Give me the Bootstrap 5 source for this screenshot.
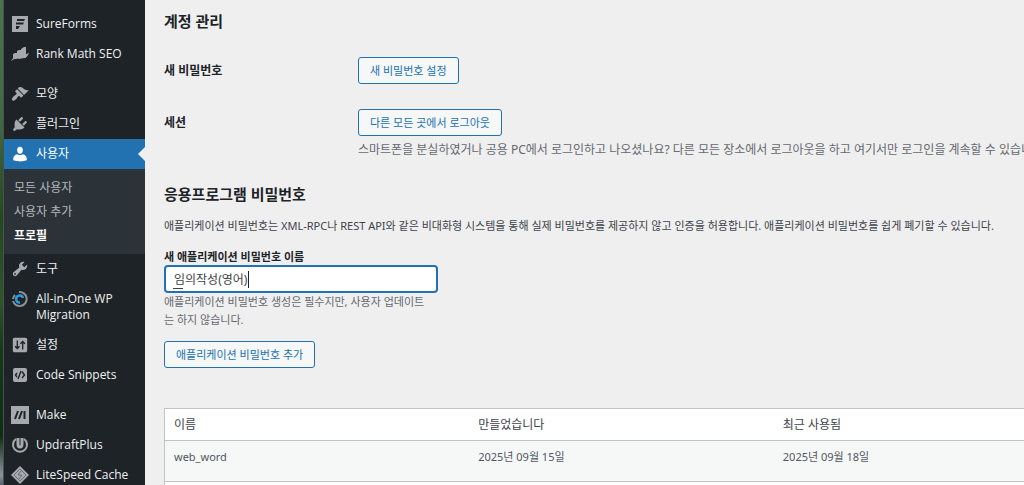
<!DOCTYPE html>
<html lang="ko">
<head>
<meta charset="utf-8">
<meta name="viewport" content="width=device-width, initial-scale=1">
<title>프로필</title>
<link rel="stylesheet" href="https://cdn.jsdelivr.net/npm/bootstrap@5.3.0/dist/css/bootstrap.min.css">
<style>
body{font-family:"Noto Sans","Noto Sans CJK KR",sans-serif;font-size:12px;line-height:18px;background:#efefef;color:#3c434a}
.desk-edge{width:4px;background:linear-gradient(to bottom,#4a7547 0,#41693f 25%,#24471f 45%,#2d5626 62%,#153a17 72%,#102c14 90%,#8a929c 98%,#59626c 100%);border-right:1px solid #4a4f52}
.admin-menu{width:141px;padding-top:9px;background:#1d2327;font-family:"Open Sans","Noto Sans CJK KR",sans-serif}
.menu-link{display:flex;gap:7px;padding:7px;color:#f0f0f1;text-decoration:none;line-height:16px;position:relative}
.menu-link svg{width:18px;height:18px;flex:none;margin:-1px 0;fill:#a7aaad}
.menu-gap{margin-top:10px}
.menu-link.active{background:#2271b1;color:#fff}
.menu-link.active svg{fill:#fff}
.menu-link.active::after{content:"";position:absolute;right:0;top:8px;border:7px solid transparent;border-right-color:#efefef;border-left:0}
.sub-menu{background:#2c3338;padding:7px 0 6px}
.sub-menu a{display:block;padding:4px 10px;line-height:16px;color:#b4b9be;text-decoration:none}
.sub-menu a.current{color:#fff;font-weight:700}
.page-main{min-width:0;padding:10px 0 0 19px}
h2{font-size:15px;line-height:22px;font-weight:700;color:#1d2327;margin:0}
.form-line{display:grid;grid-template-columns:194px 1fr;margin-top:25px}
.form-head{font-weight:700;color:#1d2327}
.form-line .form-head{padding-top:5px}
.form-line .hint{margin:5px 0 20px}
.small-copy{font-size:11px}
.intro{margin:12px 0 14px}
.btn-wp{font-size:11px;line-height:19px;padding:3px 11px;color:#2271b1;background:#f6f7f7;border:1px solid #2271b1;border-radius:3px;display:block}
.hint{color:#646970}
.name-box{width:274px}
.name-box label{display:block;line-height:16px}
.name-box .form-control{font-size:12px;line-height:18px;padding:3px 8px;height:28px;color:#3c434a;background:#fff;border:2px solid #2271b1;border-radius:4px;box-shadow:none}
/* input-method state: underlined syllable and the text cursor */
.ime-mark{position:absolute;left:9px;top:23px;width:10px;height:1px;background:#3c434a}
.ime-cursor{position:absolute;left:84px;top:6px;width:1px;height:17px;background:#1d2327}
.pass-table{width:915px;table-layout:fixed;border:1px solid #c3c4c7;background:#fff;margin:40px 0 0}
.pass-table th,.pass-table td{padding:0 9px;font-weight:400;border-bottom:1px solid #c3c4c7}
.pass-table th{height:32px}
.pass-table td{height:41px;vertical-align:top;padding-top:7px;font-size:11px;color:#50575e;background:#f6f7f7}
.pass-table tfoot td{background:#fff;height:32px}
</style>
</head>
<body class="d-flex vh-100 overflow-hidden">
<div class="desk-edge flex-shrink-0"></div>
<nav class="admin-menu flex-shrink-0">
<a class="menu-link" href="#"><svg viewBox="0 0 18 18"><path fill-rule="evenodd" d="M1 1h16v16H1zM6 4v2h7l1-2zM5 7.500v2h7l1-2zM5 11v3h2l2-3z"/></svg>SureForms</a>
<a class="menu-link" href="#"><svg viewBox="0 0 18 18"><path d="M2 9l2-1h2v6H2zM6 6l2-1h2v8H6zM10 4l3-2h2v11h-5zM0 16q2-4 5-4l3 1 5-3 5-2q-2 5-5 5l-5 1-3-1z"/></svg>Rank Math SEO</a>
<a class="menu-link menu-gap" href="#"><svg viewBox="0 0 20 20"><path d="M14.480 11.060L7.410 3.990l1.500-1.500c.5-.56 2.300-.47 3.510.32 1.210.8 1.430 1.280 2.910 2.100 1.180.64 2.450 1.260 4.450.85zm-.71.71L6.700 4.700 4.930 6.470c-.39.39-.39 1.020 0 1.410l1.060 1.060c.39.39.39 1.030 0 1.420-.6.6-1.430 1.110-2.210 1.690-.35.26-.7.530-1.010.84C1.430 14.230.4 16.080 1.400 17.070c.99 1 2.840-.03 4.180-1.360.31-.31.58-.66.85-1.020.57-.78 1.080-1.610 1.690-2.210.39-.39 1.020-.39 1.410 0l1.060 1.060c.39.390 1.020.390 1.410 0z"/></svg>모양</a>
<a class="menu-link" href="#"><svg viewBox="0 0 20 20"><path d="M13.110 4.360L9.870 7.600 8 5.730l3.240-3.240c.35-.34 1.050-.2 1.560.32.52.51.66 1.210.31 1.550zm-8 1.770l.91-1.120 9.010 9.010-1.190.84c-.71.71-2.630 1.160-3.820 1.160H6.140L4.900 17.260c-.59.590-1.540.590-2.120 0-.59-.58-.59-1.530 0-2.120l1.240-1.240v-3.880c0-1.130.4-3.190 1.090-3.890zm7.260 3.970l3.240-3.240c.34-.35 1.040-.21 1.550.31.52.51.66 1.210.31 1.550l-3.240 3.250z"/></svg>플러그인</a>
<a class="menu-link active" href="#"><svg viewBox="0 0 20 20"><path d="M10 9.800c-2.400 0-3.200-2.600-3.200-4.200C6.800 3.500 8 2 10 2s3.200 1.500 3.200 3.600c0 1.600-.8 4.200-3.200 4.200zM7 10.200q3 2 6 0c2.600.3 4.500 2.400 4.500 4.800v2S14 18.200 10 18.200 2.500 17 2.500 17v-2c0-2.400 1.900-4.500 4.500-4.800z"/></svg>사용자</a>
<div class="sub-menu"><a href="#">모든 사용자</a><a href="#">사용자 추가</a><a class="current" href="#">프로필</a></div>
<a class="menu-link" href="#"><svg viewBox="0 0 20 20"><path d="M16.680 9.770c-1.340 1.340-3.300 1.670-4.950.99l-5.410 6.520c-.99.990-2.590.990-3.580 0s-.99-2.590 0-3.570l6.520-5.420c-.68-1.650-.35-3.610.99-4.950 1.280-1.280 3.120-1.620 4.720-1.060l-2.890 2.890 2.820 2.820 2.860-2.870c.53 1.580.18 3.390-1.080 4.650zM3.810 16.210c.4.390 1.040.390 1.430 0 .4-.4.4-1.040 0-1.430-.39-.4-1.030-.4-1.430 0-.39.390-.39 1.030 0 1.430z"/></svg>도구</a>
<a class="menu-link" href="#"><svg viewBox="0 0 18 18"><g fill="none" stroke-width="2"><path stroke="#8c9196" d="M8 2a7 7 0 1 1-6 9M2 9a7 7 0 0 1 2-4"/><path stroke="#2b9be0" stroke-width="2.500" d="M12 8a3.500 3.500 0 1 0-3 4.500"/></g></svg>All-in-One WP Migration</a>
<a class="menu-link" href="#"><svg viewBox="0 0 20 20"><path d="M18 16V4c0-1.100-.9-2-2-2H4c-1.100 0-2 .9-2 2v12c0 1.100.9 2 2 2h12c1.100 0 2-.9 2-2z"/><path fill="none" stroke="#1d2327" stroke-width="1.500" d="M7 5v9M4.500 11.500L7 14l2.500-2.500M13 15V6M10.500 8.500L13 6l2.500 2.500"/></svg>설정</a>
<a class="menu-link" href="#"><svg viewBox="0 0 18 18"><rect x="2" y="2" width="14" height="14" rx="2"/><path fill="none" stroke="#1d2327" stroke-width="1.400" d="M6 7L4.500 9 6 11M7 13l3-8M11 5.500L13.500 9 11 12"/></svg>Code Snippets</a>
<a class="menu-link menu-gap" href="#"><svg viewBox="0 0 18 18"><path d="M0 0h18v18H0z"/><path stroke="#1d2327" stroke-width="2" d="M4 13l3-8M8 13l3-8M13.500 13V5"/></svg>Make</a>
<a class="menu-link" href="#"><svg viewBox="0 0 18 18"><g fill="none" stroke="#a7aaad"><path stroke-width="2" d="M5 3a7 7 0 1 0 8 0"/><path stroke-width="3" d="M7 2v6q0 3 2 3t2-3V2"/></g></svg>UpdraftPlus</a>
<a class="menu-link" href="#"><svg viewBox="0 0 18 18"><path d="M9 0l9 9-9 9-9-9z"/><path fill="none" stroke="#6a7075" d="M9 3l6 6-6 6-6-6zM10 5L7 9h4l-3 4"/></svg><span class="text-nowrap">LiteSpeed Cache</span></a>
</nav>
<main class="page-main flex-grow-1 overflow-hidden">
<h2>계정 관리</h2>
<div class="form-line"><div class="form-head">새 비밀번호</div><div><button class="btn btn-wp" type="button">새 비밀번호 설정</button></div></div>
<div class="form-line"><div class="form-head">세션</div><div><button class="btn btn-wp" type="button">다른 모든 곳에서 로그아웃</button><p class="hint text-nowrap">스마트폰을 분실하였거나 공용 PC에서 로그인하고 나오셨나요? 다른 모든 장소에서 로그아웃을 하고 여기서만 로그인을 계속할 수 있습니다.</p></div></div>
<h2 class="pt-1">응용프로그램 비밀번호</h2>
<p class="small-copy intro text-nowrap">애플리케이션 비밀번호는 XML-RPC나 REST API와 같은 비대화형 시스템을 통해 실제 비밀번호를 제공하지 않고 인증을 허용합니다. 애플리케이션 비밀번호를 쉽게 폐기할 수 있습니다.</p>
<div class="name-box small-copy"><label class="form-head" for="app-name">새 애플리케이션 비밀번호 이름</label>
<div class="position-relative"><input class="form-control" id="app-name" type="text" value="임의작성(영어)"><span class="ime-mark"></span><span class="ime-cursor"></span></div>
<p class="hint pe-2 pb-1 mb-2">애플리케이션 비밀번호 생성은 필수지만, 사용자 업데이트는 하지 않습니다.</p></div>
<button class="btn btn-wp" type="button">애플리케이션 비밀번호 추가</button>
<table class="pass-table"><thead><tr><th>이름</th><th>만들었습니다</th><th>최근 사용됨</th></tr></thead>
<tbody><tr><td>web_word</td><td>2025년 09월 15일</td><td>2025년 09월 18일</td></tr></tbody>
<tfoot><tr><td></td><td></td><td></td></tr></tfoot></table>
</main>
<script src="https://cdn.jsdelivr.net/npm/bootstrap@5.3.0/dist/js/bootstrap.bundle.min.js"></script>
</body>
</html>
